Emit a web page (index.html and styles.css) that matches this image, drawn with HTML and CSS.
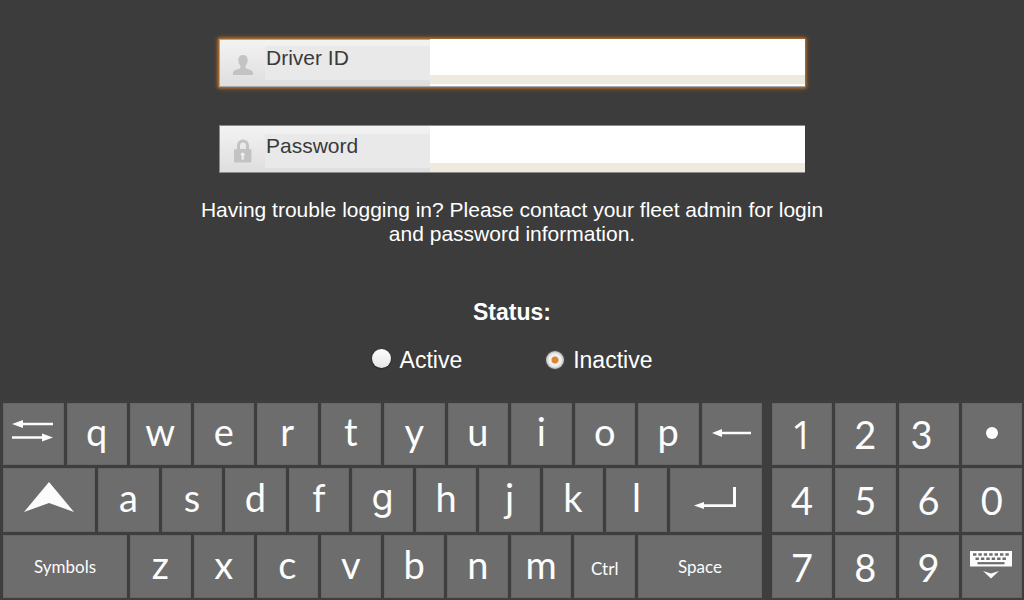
FILE: index.html
```html
<!DOCTYPE html>
<html lang="en">
<head>
<meta charset="utf-8">
<meta name="viewport" content="width=device-width, initial-scale=1">
<title>Driver login</title>
<link rel="stylesheet" href="styles.css">
</head>
<body>
<main class="login">
  <form class="form">
    <div class="field field-focus">
      <label class="field-label" for="driver">
        <svg class="field-icon" viewBox="0 0 20 20" aria-hidden="true"><path d="M10 0C13 0 14.7 2 14.7 5C14.7 7.5 13.6 9.6 12.6 10.8C12.3 12.6 12.6 13.2 14 13.8C17.5 15 20 15.6 20 18V20H0V18C0 15.6 2.500 15 6 13.800C7.400 13.200 7.700 12.600 7.400 10.800C6.400 9.600 5.300 7.500 5.300 5C5.300 2 7 0 10 0Z" fill="#c3c3c3"/></svg>
        <span class="field-text">Driver ID</span>
      </label>
      <input class="field-input" id="driver" type="text">
    </div>
    <div class="field">
      <label class="field-label" for="password">
        <svg class="field-icon field-icon-lock" viewBox="0 0 20 24" aria-hidden="true"><path d="M5.500 11V6.500C5.500 0.500 14.500 0.500 14.500 6.500V11" fill="none" stroke="#c3c3c3" stroke-width="3"/><rect x="1" y="10" width="17.500" height="13.500" rx="1.500" fill="#c3c3c3"/><circle cx="9.700" cy="15.500" r="2" fill="#ededed"/><path d="M9 15.500h1.500l.7 5H8.300z" fill="#ededed"/></svg>
        <span class="field-text field-text-low">Password</span>
      </label>
      <input class="field-input" id="password" type="password">
    </div>
    <p class="help">Having trouble logging in? Please contact your fleet admin for login and password information.</p>
    <fieldset class="status">
      <legend class="status-title">Status:</legend>
      <div class="options">
        <label class="option"><input class="radio" type="radio" name="status">Active</label>
        <label class="option"><input class="radio" type="radio" name="status" checked>Inactive</label>
      </div>
    </fieldset>
  </form>
</main>
<section class="keyboard" aria-label="Keyboard">
  <div class="letters">
    <div class="row">
      <button class="key" type="button" aria-label="Tab"><svg class="icon-tab" viewBox="0 0 42 22" aria-hidden="true"><path d="M0 4L11 0V2.700H41V5.300H11V8ZM41 17.500L30 13.500V16.200H0V18.800H30V21.500Z" fill="#fcfcfc"/></svg></button>
      <button class="key" type="button">q</button>
      <button class="key" type="button">w</button>
      <button class="key" type="button">e</button>
      <button class="key" type="button">r</button>
      <button class="key" type="button">t</button>
      <button class="key" type="button">y</button>
      <button class="key" type="button">u</button>
      <button class="key" type="button">i</button>
      <button class="key" type="button">o</button>
      <button class="key" type="button">p</button>
      <button class="key key-back" type="button" aria-label="Backspace"><svg class="icon-back" viewBox="0 0 39 8" aria-hidden="true"><path d="M0 4L10 0V2.700H39V5.300H10V8Z" fill="#fcfcfc"/></svg></button>
    </div>
    <div class="row row-home">
      <button class="key" type="button" aria-label="Shift"><svg class="icon-shift" viewBox="0 0 50 30" aria-hidden="true"><path d="M25 0L50 30L25 21L0 30Z" fill="#fcfcfc"/></svg></button>
      <button class="key" type="button">a</button>
      <button class="key" type="button">s</button>
      <button class="key" type="button">d</button>
      <button class="key" type="button">f</button>
      <button class="key key-g" type="button">g</button>
      <button class="key" type="button">h</button>
      <button class="key" type="button">j</button>
      <button class="key" type="button">k</button>
      <button class="key" type="button">l</button>
      <button class="key key-enter" type="button" aria-label="Enter"><svg class="icon-enter" viewBox="0 0 42 22" aria-hidden="true"><path d="M0 18.500L10 15V17.200H39V0H42V20H10V22Z" fill="#fcfcfc"/></svg></button>
    </div>
    <div class="row row-bottom">
      <button class="key key-word" type="button">Symbols</button>
      <button class="key" type="button">z</button>
      <button class="key" type="button">x</button>
      <button class="key" type="button">c</button>
      <button class="key" type="button">v</button>
      <button class="key" type="button">b</button>
      <button class="key" type="button">n</button>
      <button class="key" type="button">m</button>
      <button class="key key-word key-ctrl" type="button">Ctrl</button>
      <button class="key key-word" type="button">Space</button>
    </div>
  </div>
  <div class="numbers">
    <button class="key key-one" type="button">1</button>
    <button class="key" type="button">2</button>
    <button class="key key-three" type="button">3</button>
    <button class="key key-dot" type="button" aria-label="Period"><svg class="icon-dot" viewBox="0 0 12 12" aria-hidden="true"><circle cx="6" cy="6" r="6" fill="#fff"/></svg></button>
    <button class="key" type="button">4</button>
    <button class="key" type="button">5</button>
    <button class="key" type="button">6</button>
    <button class="key" type="button">0</button>
    <button class="key" type="button">7</button>
    <button class="key" type="button">8</button>
    <button class="key" type="button">9</button>
    <button class="key key-hide" type="button" aria-label="Hide keyboard"><svg class="icon-hide" viewBox="0 0 42 28" aria-hidden="true"><rect width="42" height="15.500" fill="#fcfcfc"/><path d="M3 3.500H39" stroke="#6d6d6d" stroke-width="2.600" stroke-dasharray="3.400 2"/><path d="M5.500 7.700H37" stroke="#6d6d6d" stroke-width="2.600" stroke-dasharray="3.400 2"/><path d="M7.500 12.200H34.500" stroke="#6d6d6d" stroke-width="2.200"/><path d="M13 20L21 22.500L29 20L21 27.500Z" fill="#fcfcfc"/></svg></button>
  </div>
</section>
</body>
</html>
```
FILE: styles.css
```css
* {
  box-sizing: border-box;
}

body {
  margin: 0;
  min-height: 100vh;
  display: flex;
  flex-direction: column;
  background: #3c3c3c;
  color: #fff;
  font-family: "Liberation Sans", Arial, sans-serif;
}

.login {
  flex: 1;
  padding: 39px 16px 24px;
}

.form {
  max-width: 640px;
  margin: 0 auto;
}

.field {
  display: grid;
  grid-template-columns: 210px 1fr;
  max-width: 586px;
  height: 48px;
  margin: 0 auto 38px;
  border: 1px solid #8c8c8c;
  border-right: 0;
}

.field-focus {
  border-color: #a9a9a9;
  box-shadow: 0 0 2px 1px #b06c2c, 0 0 5px 1px #a8682c;
}

.field-label {
  display: flex;
  align-items: center;
  padding: 0 0 0 13px;
  background: linear-gradient(#f3f3f3, #dedede);
}

.field-icon {
  width: 20px;
  height: 20px;
  margin: 4px 12px 0 0;
}

.field-icon-lock {
  height: 24px;
}

.field-text {
  flex: 1;
  height: 34px;
  padding-left: 1px;
  background: #e9e9e9;
  color: #3a3a3a;
  font-size: 21px;
  line-height: 24px;
}

.field-text-low {
  margin-top: 4px;
}

.field-input {
  width: 100%;
  height: 100%;
  padding: 0 12px 8px;
  border: 0;
  border-radius: 0;
  outline: 0;
  background: linear-gradient(#fff 37px, #eeeade 37px);
  color: #3a3a3a;
  font: 21px "Liberation Sans", Arial, sans-serif;
}

.field-focus .field-input {
  background: linear-gradient(#fff 35px, #eeeade 35px 44px, #fff 44px);
  box-shadow: 0 -1px #fff;
}

.help {
  margin: -13px 0 0;
  font-size: 21px;
  line-height: 24px;
  text-align: center;
}

.status {
  margin: 54px 0 0;
  padding: 0;
  border: 0;
}

.status-title {
  margin: 0 auto;
  padding: 0;
  font-size: 23px;
  font-weight: bold;
  line-height: 24px;
}

.options {
  display: flex;
  justify-content: center;
  gap: 84px;
  margin-top: 24px;
}

.option {
  display: flex;
  align-items: center;
  gap: 9px;
  font-size: 23px;
  line-height: 24px;
}

.radio {
  appearance: none;
  width: 19px;
  height: 19px;
  margin: 0 0 3px;
  border-radius: 50%;
  background: linear-gradient(#fff, #e4e4e4);
  box-shadow: 0 1px 2px #222;
}

.radio:checked {
  width: 18px;
  height: 18px;
  margin: 0;
  background: radial-gradient(circle, #dc8430 3px, #f0f0f0 4px, #f0f0f0 6px, #b8b8b8 9px);
  box-shadow: 0 0 2px #666;
}

.keyboard {
  display: grid;
  grid-template-columns: 759fr 250fr;
  gap: 10px;
  padding: 3px 2px 2px 3px;
  background: #3e3e3e;
}

.letters,
.numbers {
  display: grid;
  grid-template-rows: 62px 64px 63px;
  gap: 3px;
}

.numbers {
  grid-template-columns: repeat(4, 1fr);
}

.row {
  display: grid;
  grid-template-columns: repeat(12, 1fr);
  gap: 3px;
}

.row-home {
  grid-template-columns: 32fr repeat(9, 21fr) 32fr;
}

.row-bottom {
  grid-template-columns: 41fr repeat(8, 20fr) 41fr;
}

.key {
  display: flex;
  align-items: center;
  justify-content: center;
  min-width: 0;
  padding: 0;
  border: 1px solid #666;
  border-radius: 0;
  background: #6d6d6d;
  color: #fcfcfc;
  font: 38px/40px Lato, sans-serif;
}

.row .key {
  padding-bottom: 6px;
}

.row .key-g {
  font-family: Inter, sans-serif;
  font-size: 36px;
}

.row .key-word {
  padding-bottom: 0;
  font-size: 17px;
}

.row .key-ctrl {
  padding-top: 4px;
}

.row .key-back {
  padding-bottom: 3px;
}

.row .key-enter {
  padding: 0 2px 4px 0;
}

.key-one {
  font-family: "Open Sans", sans-serif;
}

.key-three {
  padding-right: 14px;
}

.key-dot {
  padding-bottom: 3px;
}

.key-hide {
  padding: 0 2px 4px 0;
}

.icon-tab {
  width: 42px;
  height: 22px;
}

.icon-back {
  width: 39px;
  height: 8px;
}

.icon-shift {
  width: 50px;
  height: 30px;
}

.icon-enter {
  width: 42px;
  height: 22px;
}

.icon-dot {
  width: 12px;
  height: 12px;
}

.icon-hide {
  width: 42px;
  height: 28px;
}
```
